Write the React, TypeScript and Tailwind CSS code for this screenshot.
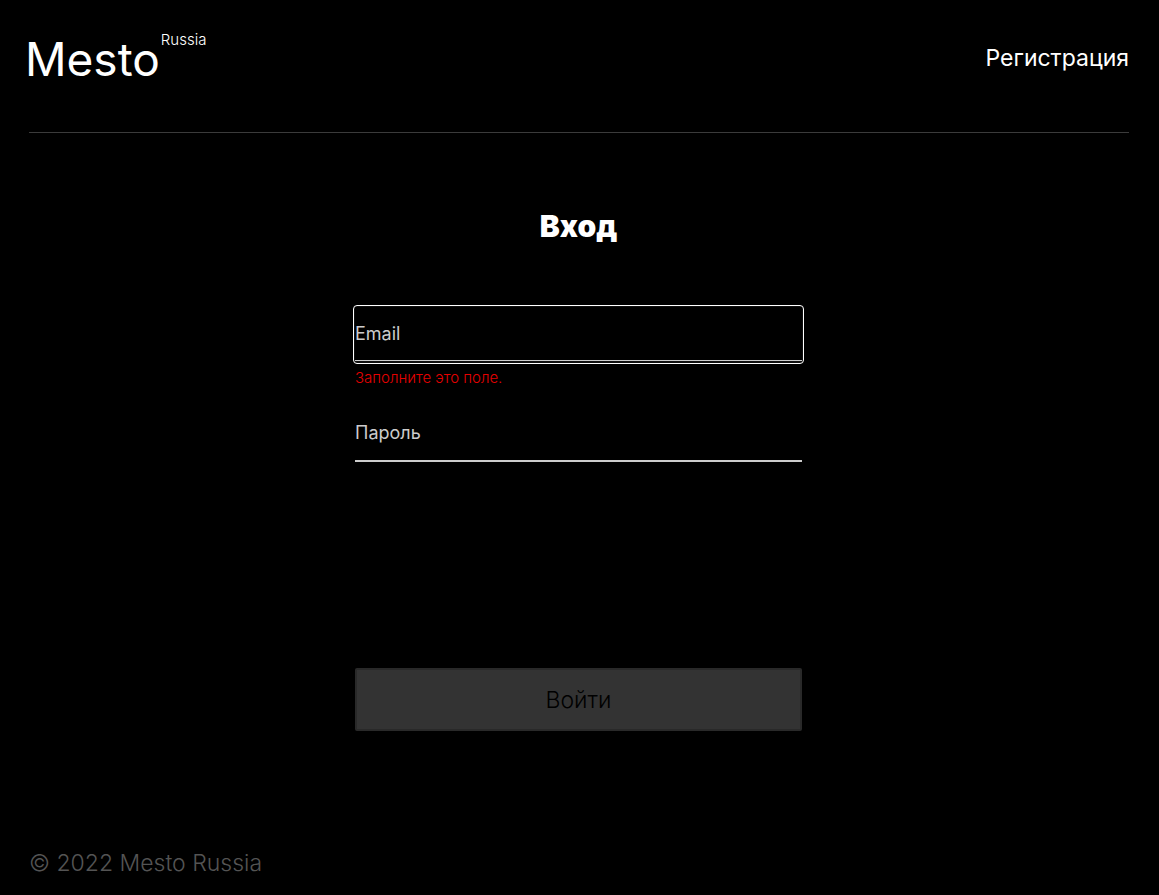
import { useState } from "react";

export default function App() {
  const [email, setEmail] = useState("");
  const [password, setPassword] = useState("");
  return (
    <div className="flex min-h-screen flex-col bg-black pr-[30px] pl-[29px] font-['Inter',sans-serif] text-white">
      <header className="flex h-[133px] items-start justify-between border-b border-[#545454]/70 pt-[33px]">
        <a href="#" className="flex items-start gap-px whitespace-nowrap">
          <span className="-ml-[4px] text-[46px] leading-[52px]">Mesto</span>
          <span className="text-[15px] leading-[14px] font-light">Russia</span>
        </a>
        <a href="#register" className="mt-[11px] text-[23px] leading-[28px]">Регистрация</a>
      </header>
      <main className="flex grow flex-col items-center pt-[75px] pr-px">
        <form noValidate className="flex w-full max-w-[447px] flex-col">
          <h1 className="text-center text-[30px] leading-[36px] font-black">Вход</h1>
          <div className="mt-[61px] h-[101px]">
            <div className="-mx-[2px] rounded-[4px] border border-white bg-[#101010] px-px pt-px pb-[2px]">
              <input
                type="email"
                aria-label="Email"
                aria-describedby="email-error"
                placeholder="Email"
                value={email}
                onChange={(e) => setEmail(e.target.value)}
                className="block h-[54px] w-full border-b border-[#cccccc] bg-black text-[18px] outline-none placeholder:text-[#cccccc]"
              />
            </div>
            <p id="email-error" className="pt-[5px] text-[15px] leading-[18px] font-light text-[#e60000]">
              Заполните это поле.
            </p>
          </div>
          <input
            type="password"
            aria-label="Пароль"
            placeholder="Пароль"
            value={password}
            onChange={(e) => setPassword(e.target.value)}
            className="block h-[56px] w-full border-b-2 border-[#cccccc] pb-[2px] text-[18px] outline-none placeholder:text-[#cccccc]"
          />
          <button
            type="submit"
            disabled
            className="mt-[206px] h-[63px] w-full rounded-[2px] border-2 border-[#292929] bg-[#333333] pt-[2px] text-[23px] font-light text-black"
          >
            Войти
          </button>
        </form>
      </main>
      <footer className="pt-8 pb-[18px] text-[23px] leading-[28px] font-light text-[#545454]">
        © 2022 Mesto Russia
      </footer>
    </div>
  );
}
